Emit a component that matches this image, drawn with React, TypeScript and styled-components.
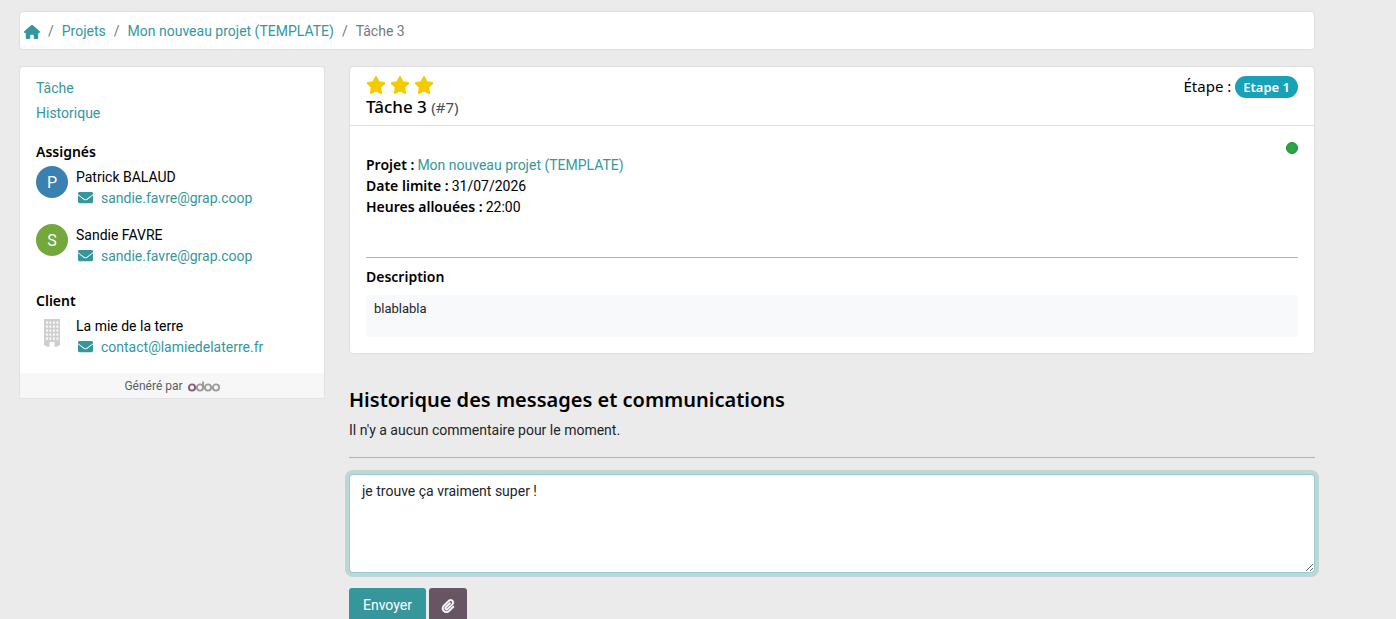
import React, { useState } from "react";
import styled, { createGlobalStyle } from "styled-components";
import { FaHouse, FaStar, FaPaperclip } from "react-icons/fa6";
import { FaEnvelope } from "react-icons/fa";

const teal = "#35979c";
const border = "#dedfe0";
const headingFont = '"Noto Sans", "Open Sans", sans-serif';

const GlobalStyle = createGlobalStyle`
  *, *::before, *::after { box-sizing: border-box; }
  body {
    margin: 0;
    background: #ebebeb;
    color: #000;
    font: 14px/21px Roboto, "Open Sans", sans-serif;
    scrollbar-width: none;
  }
  a { color: ${teal}; text-decoration: none; }
  h1, h2, h3, p, ul, ol, dl, dd { margin: 0; padding: 0; }
  ul, ol { list-style: none; }
`;

const Page = styled.div`
  padding: 11px 81px 0 19px;
`;

const Breadcrumb = styled.nav`
  background: #fff;
  border: 1px solid ${border};
  border-radius: 4px;
  padding: 9px 4px 7px;
  margin-bottom: 16px;

  ol { display: flex; align-items: center; }
  li { display: flex; align-items: center; color: #74797e; }
  li + li::before { content: "/"; padding: 0 8px; color: #74797e; }
  svg { display: block; }
`;

const Columns = styled.div`
  display: grid;
  grid-template-columns: calc(25% - 18px) minmax(0, 1fr);
  gap: 24px;
  align-items: start;
`;

const Card = styled.section`
  background: #fff;
  border: 1px solid ${border};
  border-radius: 4px;
  overflow: hidden;
`;

const SideBody = styled.div`
  padding: 11px 16px 15px;
`;

const SideNav = styled.nav`
  display: flex;
  flex-direction: column;
  align-items: flex-start;
  gap: 4px;
`;

const GroupTitle = styled.h3<{ $gap?: number }>`
  font: 600 14px/21px ${headingFont};
  margin-top: ${(p) => p.$gap ?? 0}px;
`;

const People = styled.ul`
  display: flex;
  flex-direction: column;
  gap: 15px;
  margin-top: 4px;
`;

const Person = styled.li`
  display: flex;
  gap: 8px;
`;

const PersonText = styled.div`
  padding-top: 1px;
`;

const Avatar = styled.span<{ $color?: string }>`
  flex: none;
  display: flex;
  align-items: center;
  justify-content: center;
  width: 32px;
  height: 32px;
  border-radius: 50%;
  background: ${(p) => p.$color ?? "transparent"};
  color: #fff;
  font-size: 16px;

  svg { margin-top: 4px; }
`;

const Mail = styled.a`
  display: flex;
  align-items: center;
  gap: 8px;
  padding-left: 2px;

  svg { margin-bottom: 3px; }
`;

const SideFooter = styled.footer`
  display: flex;
  align-items: center;
  justify-content: center;
  gap: 5px;
  padding: 3px 16px 1px;
  background: #f7f7f7;
  color: #5b5e61;
  font-size: 12px;

  svg { display: block; }
`;

const TaskHeader = styled.header`
  display: flex;
  justify-content: space-between;
  align-items: flex-start;
  padding: 8px 16px 6px;
  border-bottom: 1px solid ${border};
`;

const Stars = styled.div`
  display: flex;
  gap: 4px;
  color: #f3cc00;

  svg { display: block; }
`;

const TaskTitle = styled.h1`
  font: 500 17px/24px ${headingFont};

  small { font-size: 15px; font-weight: 400; color: #4a4d50; }
`;

const Stage = styled.div`
  display: flex;
  align-items: flex-start;
  gap: 4px;
  font: 400 15px/22px ${headingFont};
`;

const Badge = styled.span`
  margin-top: 1px;
  padding: 0 8px;
  border-radius: 11px;
  background: #17a2b8;
  color: #fff;
  font: 600 13px/22px ${headingFont};
`;

const TaskBody = styled.div`
  padding: 16px;
`;

const Status = styled.span`
  float: right;
  width: 12px;
  height: 12px;
  border: 1px solid #1f8a39;
  border-radius: 50%;
  background: #28a745;
`;

const Facts = styled.dl`
  padding: 12px 0 40px;
`;

const Fact = styled.div`
  display: flex;
  align-items: baseline;
  gap: 3px;
  height: 21px;

  dt { font: 600 14px/21px ${headingFont}; }
`;

const Rule = styled.hr<{ $gap: number }>`
  margin: 0 0 ${(p) => p.$gap}px;
  border: 0;
  border-top: 1px solid #b3b3b3;
`;

const Description = styled.div`
  min-height: 42px;
  margin-top: 8px;
  padding: 3px 8px;
  background: #f8f9fb;
  font-size: 13px;
  color: #212529;
`;

const History = styled.section`
  padding-top: 32px;

  h2 { font: 600 20px/28px ${headingFont}; }
  p { margin: 6px 0 16px; color: #212529; }
`;

const Message = styled.textarea`
  display: block;
  width: 100%;
  height: 99px;
  padding: 6px 12px;
  border: 1px solid #9acbcd;
  border-radius: 4px;
  outline: 0;
  background: #fff;
  box-shadow: 0 0 0 4px rgba(53, 151, 156, 0.25);
  color: #212529;
  font: inherit;
  resize: vertical;
`;

const Actions = styled.div`
  display: flex;
  gap: 3px;
  margin-top: 15px;
`;

const Button = styled.button<{ $color: string; $pad: number }>`
  display: flex;
  align-items: center;
  padding: 7px ${(p) => p.$pad}px;
  min-height: 35px;
  border: 0;
  border-radius: 3px;
  background: ${(p) => p.$color};
  color: #fff;
  font: inherit;
  cursor: pointer;

  svg { stroke: #fff; stroke-width: 20; }
`;

const BuildingIcon = () => (
  <svg width="16" height="28" viewBox="0 0 16 28" aria-hidden="true">
    <path fill="#cfcfcf" d="M0 0h16v26q-2 1.500-5.500 2v-5h-5v5Q2 27.500 0 26z" />
    {[3, 7, 11, 15, 19].map((y) =>
      [2, 5.5, 9, 12.5].map((x) => (
        <rect key={`${x}-${y}`} x={x} y={y - 0.5} width="1.8" height="2.2" fill="#fff" />
      )),
    )}
  </svg>
);

const OdooLogo = () => (
  <svg width="32" height="12" viewBox="0 1 32 12" role="img" aria-label="odoo" fill="none" strokeWidth="1.900">
    <circle cx="4" cy="7.500" r="3.100" stroke="#875a7b" />
    <g stroke="#9b9b9b">
      <circle cx="12" cy="7.500" r="3.100" />
      <circle cx="20" cy="7.500" r="3.100" />
      <circle cx="28" cy="7.500" r="3.100" />
      <path d="M15.100 1.500v6" />
    </g>
  </svg>
);

const Contact = ({ name, mail, children }: { name: string; mail: string; children: React.ReactNode }) => (
  <Person>
    {children}
    <PersonText>
      <div>{name}</div>
      <Mail href={`mailto:${mail}`}>
        <FaEnvelope size={15} />
        {mail}
      </Mail>
    </PersonText>
  </Person>
);

export default function App() {
  const [text, setText] = useState("je trouve ça vraiment super !");
  return (
    <>
      <GlobalStyle />
      <Page>
        <Breadcrumb aria-label="Fil d'Ariane">
          <ol>
            <li><a href="#home" aria-label="Accueil"><FaHouse size={16} /></a></li>
            <li><a href="#projets">Projets</a></li>
            <li><a href="#projet">Mon nouveau projet (TEMPLATE)</a></li>
            <li aria-current="page">Tâche 3</li>
          </ol>
        </Breadcrumb>
        <Columns>
          <Card as="aside">
            <SideBody>
              <SideNav>
                <a href="#tache">Tâche</a>
                <a href="#historique">Historique</a>
              </SideNav>
              <GroupTitle $gap={17}>Assignés</GroupTitle>
              <People>
                <Contact name="Patrick BALAUD" mail="sandie.favre@grap.coop"><Avatar $color="#3a80b0">P</Avatar></Contact>
                <Contact name="Sandie FAVRE" mail="sandie.favre@grap.coop"><Avatar $color="#74a83c">S</Avatar></Contact>
              </People>
              <GroupTitle $gap={23}>Client</GroupTitle>
              <People>
                <Contact name="La mie de la terre" mail="contact@lamiedelaterre.fr"><Avatar><BuildingIcon /></Avatar></Contact>
              </People>
            </SideBody>
            <SideFooter>Généré par <OdooLogo /></SideFooter>
          </Card>
          <main>
            <Card id="tache">
              <TaskHeader>
                <div>
                  <Stars role="img" aria-label="3 étoiles">
                    <FaStar size={20} /><FaStar size={20} /><FaStar size={20} />
                  </Stars>
                  <TaskTitle>Tâche 3 <small>(#7)</small></TaskTitle>
                </div>
                <Stage>Étape : <Badge>Etape 1</Badge></Stage>
              </TaskHeader>
              <TaskBody>
                <Status role="img" aria-label="En cours" />
                <Facts>
                  <Fact><dt>Projet :</dt><dd><a href="#projet">Mon nouveau projet (TEMPLATE)</a></dd></Fact>
                  <Fact><dt>Date limite :</dt><dd>31/07/2026</dd></Fact>
                  <Fact><dt>Heures allouées :</dt><dd>22:00</dd></Fact>
                </Facts>
                <Rule $gap={8} />
                <GroupTitle>Description</GroupTitle>
                <Description>blablabla</Description>
              </TaskBody>
            </Card>
            <History id="historique">
              <h2>Historique des messages et communications</h2>
              <p>Il n'y a aucun commentaire pour le moment.</p>
              <Rule $gap={16} />
              <Message aria-label="Message" value={text} onChange={(e) => setText(e.target.value)} />
              <Actions>
                <Button type="button" $color={teal} $pad={14}>Envoyer</Button>
                <Button type="button" $color="#685563" $pad={12} aria-label="Joindre un fichier"><FaPaperclip size={14} /></Button>
              </Actions>
            </History>
          </main>
        </Columns>
      </Page>
    </>
  );
}
